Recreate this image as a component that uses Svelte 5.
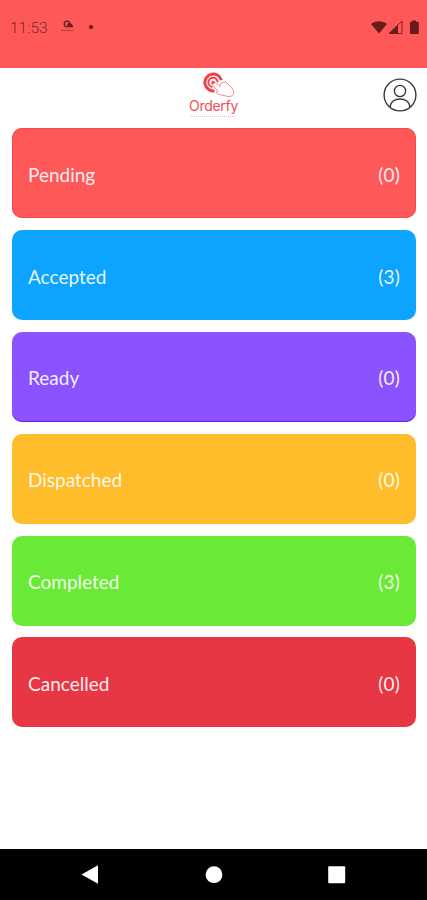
<script lang="ts">
    interface OrderStatus {
        name: string;
        count: number;
    }

    const statuses: OrderStatus[] = [
        { name: "Pending", count: 0 },
        { name: "Accepted", count: 3 },
        { name: "Ready", count: 0 },
        { name: "Dispatched", count: 0 },
        { name: "Completed", count: 3 },
        { name: "Cancelled", count: 0 },
    ];
</script>

<div class="screen">
    <div class="status-bar">
        <span class="time">11:53</span>
        <svg class="notification" width="16" height="14" viewBox="0 0 16 14" aria-hidden="true">
            <circle cx="7" cy="4" r="2.8" fill="none" stroke="currentColor" stroke-width="1.3" />
            <path d="M6.5 4 10 2.8 13.2 5.5 12.5 7.5 9.5 7.3Z" fill="currentColor" />
            <path d="M1 10.5h2m1-1v2m1-1h2m1-1v2m1-1h2m1-1v2m1-1h1" stroke="currentColor" stroke-width="1" opacity="0.5" />
        </svg>
        <span class="dot"></span>
        <svg class="system" width="50" height="15" viewBox="0 0 50 15" aria-hidden="true">
            <path d="M0 3.9C4.4.2 11.6.2 16 3.9L8 13.5Z" fill="currentColor" />
            <path d="M18 13.5 31 1v12.5Z" fill="none" stroke="currentColor" stroke-width="0.9" />
            <path d="M18 13.5 27 4.8v8.7Z" fill="currentColor" />
            <path d="M41 1.8V.5h4v1.3h2q.8 0 .8.8V13q0 .9-.8.9h-7.2q-.8 0-.8-.9V2.6q0-.8.8-.8Z" fill="currentColor" />
        </svg>
    </div>

    <header>
        <div class="logo">
            <svg width="34" height="28" viewBox="0 0 34 28" fill="none" aria-hidden="true">
                <path d="M18.4 9.2A8.4 8.4 0 1 0 11.5 19.8" stroke="#ee4148" stroke-width="3" />
                <path d="M14.6 11.2A4.6 4.6 0 1 0 9.4 15.9" stroke="#ee4148" stroke-width="2" />
                <path d="M9.2 11.2q1.2-1.3 2.6 0l5.2 4.3q-.2-3.6 3.4-4.4 2.6-.3 4.8 1.9l3.4 3.7q3.3 3.8 2 6.6-1.5 2.6-5.6 2.2l-7.5-1.7q-2.6-.4-4-1.9-.3-1.5 1.6-1.5l-5.7-6.6q-1.2-1.3-.2-2.6Z" fill="#fff" stroke="#f4686d" stroke-width="0.8" />
                <circle cx="10" cy="11.6" r="1.6" fill="#ee4148" />
            </svg>
            <span class="brand">Orderfy</span>
            <span class="tagline"></span>
        </div>
        <button class="profile" aria-label="Profile">
            <svg width="34" height="34" viewBox="0 0 34 34" fill="none" stroke="#3a3a3a" stroke-width="1.4">
                <circle cx="17" cy="17" r="15.9" />
                <circle cx="17" cy="13" r="5.6" />
                <path d="M7.2 29.2C7.2 18.2 26.8 18.2 26.8 29.2" />
            </svg>
        </button>
    </header>

    <main>
        {#each statuses as status}
            <div class="card {status.name.toLowerCase()}">
                <span>{status.name}</span>
                <span class="count">({status.count})</span>
            </div>
        {/each}
    </main>

    <nav>
        <svg width="18" height="20" viewBox="0 0 18 20" aria-hidden="true">
            <path d="M.5 9.5 17 .3v18.4Z" fill="#fff" />
        </svg>
        <svg width="18" height="18" viewBox="0 0 18 18" aria-hidden="true">
            <circle cx="9" cy="8.7" r="8.4" fill="#fff" />
        </svg>
        <svg width="18" height="18" viewBox="0 0 18 18" aria-hidden="true">
            <rect x="0.2" y="0.2" width="17" height="17" rx="1" fill="#fff" />
        </svg>
    </nav>
</div>

<style>
    :global(body) {
        margin: 0;
    }

    .screen {
        display: flex;
        flex-direction: column;
        width: 100%;
        height: 900px;
        background: #fff;
        font-family: Lato, sans-serif;
    }

    .status-bar {
        display: flex;
        align-items: flex-start;
        box-sizing: border-box;
        height: 67.5px;
        padding: 20px 7px 0 10px;
        background: #ff5858;
        color: #7a2828;
    }

    .time {
        width: 50px;
        font-family: Roboto, sans-serif;
        font-size: 15.5px;
        font-weight: 300;
        line-height: 17px;
    }

    .notification {
        color: #64201f;
    }

    .dot {
        width: 4px;
        height: 4px;
        margin: 5px 0 0 13px;
        border-radius: 50%;
        background: #501412;
    }

    .system {
        margin-left: auto;
        margin-right: -1px;
        color: #691b1b;
    }

    header {
        display: grid;
        grid-template-columns: 1fr auto 1fr;
        height: 60.5px;
    }

    .logo {
        display: flex;
        grid-column: 2;
        flex-direction: column;
        align-items: center;
        padding-top: 3px;
    }

    .logo svg {
        margin-left: 14px;
    }

    .brand {
        margin-top: -1px;
        color: #ef4e55;
        font-family: Inter, sans-serif;
        font-size: 14px;
        line-height: 16px;
        letter-spacing: -0.3px;
    }

    .tagline {
        width: 44px;
        height: 1px;
        margin-top: 2px;
        border-top: 1px dotted #f7b6b9;
    }

    .profile {
        justify-self: end;
        width: 34px;
        height: 34px;
        margin: 10.5px 10px 0 0;
        padding: 0;
        border: 0;
        background: none;
    }

    .profile svg {
        display: block;
    }

    main {
        display: flex;
        flex: 1;
        flex-direction: column;
        gap: 11.8px;
        padding: 0.4px 11px 0 12px;
    }

    .card {
        display: flex;
        align-items: center;
        justify-content: space-between;
        box-sizing: border-box;
        height: 90px;
        padding: 2px 16px 0;
        border-radius: 10px;
        color: rgba(255, 255, 255, 0.92);
        font-size: 19px;
    }

    .count {
        letter-spacing: 0.2px;
    }

    .pending {
        background: #ff5858;
        box-shadow: inset 0 0 0 1px #fa484c;
    }

    .accepted {
        background: #0ca4ff;
    }

    .ready {
        background: #8b52ff;
        box-shadow: inset 0 -1px 0 #6720ed;
    }

    .dispatched {
        background: #ffbd2b;
    }

    .completed {
        background: #6ae936;
    }

    .cancelled {
        background: #e73744;
    }

    nav {
        display: flex;
        align-items: center;
        justify-content: space-between;
        box-sizing: border-box;
        height: 51px;
        padding: 0 81px;
        background: #000;
    }
</style>
